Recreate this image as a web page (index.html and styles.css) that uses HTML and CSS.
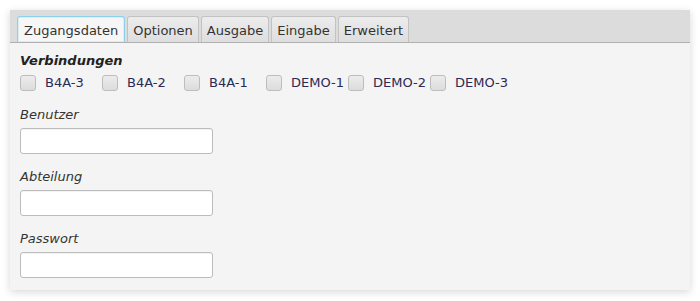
FILE: index.html
```html
<!DOCTYPE html>
<html lang="de">
  <head>
    <meta charset="UTF-8" />
    <title>Verbindung</title>
    <link rel="stylesheet" href="styles.css">
  </head>
  <body>
    <div class="panel">
      <nav class="tabbar">
        <span class="tab active">Zugangsdaten</span>
        <span class="tab">Optionen</span>
        <span class="tab">Ausgabe</span>
        <span class="tab">Eingabe</span>
        <span class="tab">Erweitert</span>
      </nav>
      <main class="content">
        <h2 class="heading">Verbindungen</h2>
        <div class="checks">
          <label class="check"><span class="box"></span>B4A-3</label>
          <label class="check"><span class="box"></span>B4A-2</label>
          <label class="check"><span class="box"></span>B4A-1</label>
          <label class="check"><span class="box"></span>DEMO-1</label>
          <label class="check"><span class="box"></span>DEMO-2</label>
          <label class="check"><span class="box"></span>DEMO-3</label>
        </div>
        <div class="field">
          <span class="field-label">Benutzer</span>
          <div class="input"></div>
        </div>
        <div class="field">
          <span class="field-label">Abteilung</span>
          <div class="input"></div>
        </div>
        <div class="field">
          <span class="field-label">Passwort</span>
          <div class="input"></div>
        </div>
      </main>
    </div>
  </body>
</html>
```

FILE: styles.css
```css
* {
  padding: 0;
  margin: 0;
  box-sizing: border-box;
}

body {
  background: #ffffff;
  padding: 10px;
  font-family: "DejaVu Sans", "Liberation Sans", sans-serif;
  font-size: 13px;
  color: #333333;
}

.panel {
  width: 680px;
  height: 280px;
  background: #f4f4f4;
  box-shadow: 0 2px 8px rgba(0, 0, 0, 0.16);
}

.tabbar {
  display: flex;
  align-items: flex-end;
  gap: 2px;
  height: 33px;
  padding-left: 7px;
  background: #dcdcdc;
  border-bottom: 1px solid #b0b0b0;
}

.tab {
  height: 26px;
  line-height: 27px;
  padding: 0 5px;
  border: 1px solid #c2c2c2;
  border-bottom: none;
  border-radius: 3px 3px 0 0;
  background: linear-gradient(#ececec, #dedede);
  color: #333333;
}

.tab.active {
  padding: 0 6px;
  background: #f6f6f6;
  border-color: #8fd0ea;
  box-shadow: inset 0 0 0 1px #d8eef7;
}

.content {
  padding: 10px 10px 0;
}

.heading {
  font-size: 13px;
  line-height: 16px;
  font-weight: bold;
  font-style: italic;
  color: #222222;
}

.checks {
  display: grid;
  grid-template-columns: repeat(6, 82px);
  margin-top: 6px;
}

.check {
  display: flex;
  align-items: center;
  gap: 9px;
  height: 16px;
  line-height: 16px;
  color: #2a2a55;
}

.box {
  width: 16px;
  height: 16px;
  border: 1px solid #bdbdbd;
  border-radius: 3px;
  background: linear-gradient(#ececec, #dcdcdc);
}

.field {
  display: flex;
  flex-direction: column;
  gap: 5px;
  margin-top: 16px;
}

.field + .field {
  margin-top: 15px;
}

.field-label {
  font-style: italic;
  line-height: 16px;
  color: #333333;
}

.input {
  width: 193px;
  height: 26px;
  background: #ffffff;
  border: 1px solid #bcbcbc;
  border-radius: 3px;
  box-shadow: inset 0 1px 1px rgba(0, 0, 0, 0.05);
}
```
